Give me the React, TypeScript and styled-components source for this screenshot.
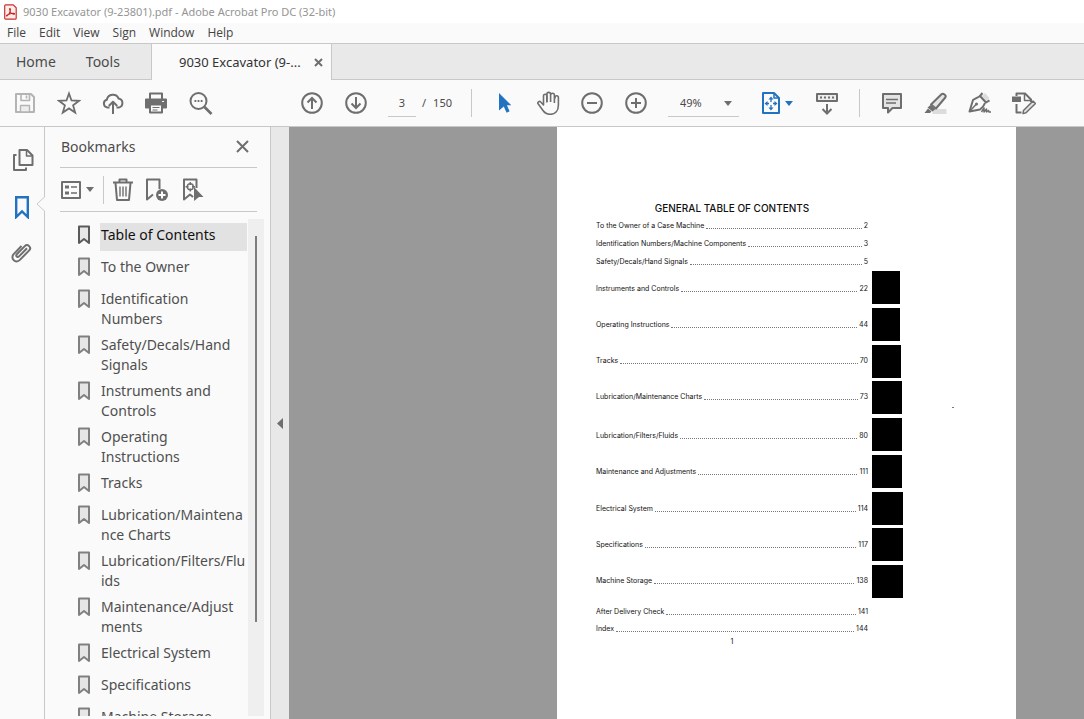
import React from "react";
import styled, { createGlobalStyle } from "styled-components";

const ink = "#6e6e6e";
const blue = "#2172c0";
const line = "#c8c8c8";
const chrome = "#fafafa";

const GlobalStyle = createGlobalStyle`
  * { box-sizing: border-box; }
  body {
    margin: 0;
    font-family: "Noto Sans", "Open Sans", sans-serif;
    color: #4b4b4b;
    background: ${chrome};
  }
  button, input, select { font: inherit; color: inherit; }
`;

const Window = styled.div`
  display: flex;
  flex-direction: column;
  height: 100vh;
  overflow: hidden;
`;

const TitleBar = styled.header`
  display: flex;
  align-items: center;
  gap: 6px;
  height: 23px;
  flex: none;
  padding-left: 4px;
  background: #fff;
  color: #959595;
  font-size: 11px;
  line-height: 16px;
`;

const MenuBar = styled.nav`
  display: flex;
  align-items: center;
  gap: 13px;
  height: 20px;
  flex: none;
  padding-left: 7px;
  font-family: "Open Sans", "Noto Sans", sans-serif;
  font-size: 12px;
  line-height: 16px;
`;

const MenuItem = styled.button`
  border: 0;
  padding: 0;
  background: none;
  color: #444;
`;

const TabStrip = styled.div`
  display: flex;
  height: 37px;
  flex: none;
  border-top: 1px solid ${line};
  background: #e9e9e9;
  box-shadow: inset 0 -1px ${line};
`;

const PlainTab = styled.button`
  border: 0;
  background: none;
  padding: 0 14px 0 16px;
  font-size: 14px;
  line-height: 20px;
`;

const NavTabs = styled.div`
  display: flex;
  width: 151px;
`;

const FileTab = styled.div`
  display: flex;
  align-items: center;
  justify-content: space-between;
  width: 181px;
  padding: 0 8px 0 27px;
  border: solid ${line};
  border-width: 0 1px;
  background: ${chrome};
  font-size: 13px;
  line-height: 20px;
  color: #333;
`;

const CloseButton = styled.button`
  display: flex;
  border: 0;
  padding: 0;
  background: none;
`;

const Toolbar = styled.div`
  display: flex;
  align-items: center;
  height: 47px;
  flex: none;
  padding-left: 3px;
  border-bottom: 1px solid ${line};
  font-size: 11px;
  line-height: 16px;
`;

const ToolButton = styled.button`
  display: flex;
  align-items: center;
  justify-content: center;
  gap: 4px;
  width: 44px;
  height: 44px;
  flex: none;
  border: 0;
  padding: 0;
  background: none;
`;

const ToolGroup = styled.div<{ $before?: number }>`
  display: flex;
  align-items: center;
  margin-left: ${(p) => p.$before ?? 0}px;
`;

const Separator = styled.span<{ $gap: number }>`
  width: 1px;
  height: 28px;
  margin: 0 ${(p) => p.$gap}px;
  background: ${line};
`;

const PageInput = styled.input`
  width: 28px;
  height: 28px;
  border: 0;
  border-bottom: 1px solid ${line};
  padding: 0;
  background: none;
  text-align: center;
`;

const PageCount = styled.span`
  display: flex;
  gap: 7px;
  width: 39px;
  margin-left: 6px;
`;

const ZoomField = styled.div`
  position: relative;
  width: 71px;
  border-bottom: 1px solid ${line};
  svg {
    position: absolute;
    right: 7px;
    top: 12px;
    pointer-events: none;
  }
`;

const ZoomSelect = styled.select`
  appearance: none;
  width: 100%;
  height: 27px;
  border: 0;
  padding: 0 0 0 12px;
  background: none;
`;

const Workspace = styled.div`
  display: flex;
  flex: 1;
  min-height: 0;
`;

const Rail = styled.nav`
  display: flex;
  flex-direction: column;
  width: 45px;
  flex: none;
  padding-top: 11px;
  border-right: 1px solid ${line};
`;

const RailButton = styled.button`
  position: relative;
  display: flex;
  align-items: center;
  justify-content: center;
  height: 46px;
  border: 0;
  padding: 0;
  background: none;
`;

const Notch = styled.svg`
  position: absolute;
  right: -1px;
  top: 12px;
`;

const Panel = styled.aside`
  display: flex;
  flex-direction: column;
  width: 226px;
  flex: none;
  padding: 0 6px 3px 15px;
  border-right: 1px solid ${line};
`;

const PanelHeader = styled.div`
  display: flex;
  align-items: center;
  justify-content: space-between;
  height: 41px;
  flex: none;
  margin-right: 7px;
  padding: 0 8px 1px 1px;
  border-bottom: 1px solid ${line};
`;

const PanelTitle = styled.h2`
  margin: 0;
  font-size: 14px;
  font-weight: 400;
  line-height: 20px;
`;

const PanelTools = styled.div`
  display: flex;
  align-items: center;
  height: 44px;
  flex: none;
  margin-right: 7px;
  padding-left: 1px;
  border-bottom: 1px solid ${line};
`;

const PanelButton = styled.button`
  display: flex;
  align-items: center;
  gap: 5px;
  border: 0;
  padding: 0;
  background: none;
`;

const IconRow = styled.div`
  display: flex;
  gap: 12px;
`;

const ListArea = styled.div`
  display: flex;
  flex: 1;
  min-height: 0;
  margin-top: 7px;
`;

const BookmarkList = styled.ul`
  display: flex;
  flex-direction: column;
  gap: 4px;
  flex: 1;
  margin: 0;
  padding: 4px 1px 0 17px;
  overflow: hidden;
  list-style: none;
`;

const BookmarkRow = styled.li`
  display: flex;
  gap: 10px;
  flex: none;
  svg { flex: none; margin: 2px 0 0 1px; }
`;

const BookmarkLink = styled.a<{ $selected?: boolean }>`
  flex: 1;
  min-height: 28px;
  padding: 2px 0 0 1px;
  background: ${(p) => (p.$selected ? "#e2e2e2" : "none")};
  color: ${(p) => (p.$selected ? "#111" : "#4f4f4f")};
  font-size: 14px;
  line-height: 20px;
  text-decoration: none;
  white-space: pre;
`;

const ScrollTrack = styled.div`
  width: 16px;
  padding: 17px 7px 0;
  background: #efefef;
`;

const ScrollThumb = styled.div`
  height: 386px;
  background: #7d7d7d;
`;

const Splitter = styled.button`
  display: flex;
  align-items: center;
  justify-content: center;
  width: 18px;
  flex: none;
  border: 0;
  padding: 0;
  background: #e8e8e8;
`;

const Canvas = styled.main`
  display: flex;
  flex: 1;
  background: #999;
`;

const Gutter = styled.div<{ $grow: number }>`
  flex: ${(p) => p.$grow} 1 0;
`;

const Sheet = styled.article`
  position: relative;
  width: 459px;
  padding: 74px 0 0 39px;
  background: #fff;
  color: #111;
  font-family: Inter, "Liberation Sans", Arial, sans-serif;
  font-size: 7px;
  line-height: 10px;
`;

const SheetTitle = styled.h1`
  width: 272px;
  margin: 0 0 2px;
  font-size: 10px;
  font-weight: 500;
  line-height: 14px;
  text-align: center;
`;

const Speck = styled.i`
  position: absolute;
  left: 395px;
  top: 280px;
  width: 2px;
  height: 1px;
  background: #777;
`;

const Sections = styled.div`
  display: flex;
  gap: 4px;
`;

const TocList = styled.ol`
  width: 272px;
  margin: 0;
  padding: 0;
  list-style: none;
`;

const TocRow = styled.li<{ $height: number; $before?: number }>`
  display: flex;
  align-items: center;
  gap: 2px;
  height: ${(p) => p.$height}px;
  margin-top: ${(p) => p.$before ?? 0}px;
`;

const Leader = styled.span`
  flex: 1;
  height: 6px;
  border-bottom: 1px dotted #777;
`;

const ThumbTabs = styled.div`
  display: flex;
  flex-direction: column;
  justify-content: space-between;
  padding-bottom: 1px;
`;

const ThumbTab = styled.span<{ $width: number }>`
  width: ${(p) => p.$width}px;
  height: 33px;
  background: #000;
`;

const Folio = styled.p`
  width: 272px;
  margin: 0;
  text-align: center;
`;

type IconProps = {
  w?: number;
  h?: number;
  color?: string;
  stroke?: number;
  children: React.ReactNode;
};

const Icon = ({ w = 24, h = 24, color = ink, stroke = 2, children }: IconProps) => (
  <svg
    width={w}
    height={h}
    viewBox={`0 0 ${w} ${h}`}
    fill="none"
    stroke={color}
    strokeWidth={stroke}
    strokeLinejoin="round"
    aria-hidden="true"
  >
    {children}
  </svg>
);

const Caret = ({ color = ink }: { color?: string }) => (
  <svg width="8" height="5" viewBox="0 0 8 5" aria-hidden="true">
    <path d="M0 0h8L4 5z" fill={color} />
  </svg>
);

const AcrobatLogo = () => (
  <svg width="13" height="16" viewBox="0 0 13 16" aria-hidden="true">
    <path
      d="M1.6.8h7.6l3 3v10.4c0 .6-.4 1-1 1H1.600c-.5 0-.9-.4-.9-1V1.700c0-.5.4-.9.9-.9z"
      fill="#fdeceb"
      stroke="#c5352f"
      strokeWidth="1.200"
    />
    <path
      d="M2.800 12c1.700-1.200 3.500-4.300 3.600-6.600 0-1.300-1-1.200-.8.1.4 2.300 2.300 4.700 4.200 4.800 1.100 0 1-.9-.2-1-2-.1-4.600.7-6.300 1.700-.9.6-1 .9-.5 1z"
      fill="none"
      stroke="#c5251f"
      strokeWidth="1.100"
    />
  </svg>
);

const SaveIcon = () => (
  <Icon color="#b4b4b4">
    <path d="M3 3h15l3 3v15H3z" />
    <path d="M8 3v6.500h8.500V3M13.500 4.500v3" strokeWidth="1.600" />
    <path d="M7.500 21v-6.500h9V21z" fill="#ededed" strokeWidth="1.400" />
  </Icon>
);

const StarIcon = () => (
  <Icon stroke={1.8}>
    <path
      strokeLinejoin="miter"
      d="M12 2.500l2.500 7 7.500.3-5.900 4.600 2.100 7.200-6.200-4.200-6.200 4.200 2.100-7.200L2 9.800l7.500-.3z"
    />
  </Icon>
);

const CloudIcon = () => (
  <Icon>
    <path d="M8.500 16.500H6.300A4 4 0 0 1 5.800 8.700 6.200 6.200 0 0 1 17.600 7.500a4.600 4.600 0 0 1 .3 9h-2.400" />
    <path d="M12 23V11M7.800 15l4.200-4.200 4.200 4.200" />
  </Icon>
);

const PrintIcon = () => (
  <Icon>
    <path d="M5 8V2.500h12V8" />
    <path d="M1 8.500h20v8H1z" fill={ink} />
    <path d="M5 13.500h12v8H5z" fill={chrome} />
    <path d="M7.500 16.500h7M7.500 19h5" strokeWidth="1.200" />
    <path d="M17 10.500h2" stroke={chrome} strokeWidth="1" />
  </Icon>
);

const FindIcon = () => (
  <Icon>
    <circle cx="9.500" cy="10" r="8" />
    <path d="M15.500 16l7 7" strokeWidth="2.600" />
    <path d="M5.500 10h1.800M8.600 10h1.800M11.700 10h1.800" />
  </Icon>
);

const CircleIcon = ({ d }: { d: string }) => (
  <Icon>
    <circle cx="12" cy="12" r="9.800" />
    <path d={d} strokeLinejoin="miter" />
  </Icon>
);

const PointerIcon = () => (
  <svg width="16" height="22" viewBox="0 0 16 22" aria-hidden="true">
    <path d="M3 1l12.300 12.200h-4.400l2.700 6-3 1.500-2.800-6.200L3 18.500z" fill={blue} />
  </svg>
);

const HandIcon = () => (
  <Icon stroke={1.600}>
    <path d="M19 7.500v-1a1.700 1.700 0 0 1 3.400 0V14c0 5.500-3 9.300-8 9.300-3.700 0-5.700-1.200-7.600-4l-4.700-6.500c-1-1.500 1.200-3.300 2.600-1.800L7.500 14V5a1.700 1.700 0 0 1 3.400 0v6.500" />
    <path d="M10.900 11V3.200a1.800 1.800 0 0 1 3.700 0V11M14.600 11V4.200a1.800 1.800 0 0 1 3.800 0V12" />
  </Icon>
);

const FitIcon = () => (
  <Icon w={20} color={blue}>
    <path d="M2 2h11l5 5v15H2z" />
    <path d="M13 2v5h5" strokeWidth="1.500" />
    <path d="M10 8v3M10 14v3M5.500 12.500H8M12 12.500h2.500" strokeWidth="1.300" />
    <path
      d="M10 5.500l2.500 3h-5zM10 19.500l2.500-3h-5zM3.500 12.500l3-2.500v5zM16.500 12.500l-3-2.500v5z"
      fill={blue}
      stroke="none"
    />
  </Icon>
);

const ScrollIcon = () => (
  <Icon>
    <path d="M2 3h20v7H2z" fill="#ededed" />
    <path d="M5 6.500h2M9 6.500h2M13 6.500h2M17 6.500h2" />
    <path d="M12 13v9M7.500 18l4.500 4.500 4.500-4.500" strokeLinejoin="miter" />
  </Icon>
);

const CommentIcon = () => (
  <Icon>
    <path d="M3 3h18v14h-8.500L8 21.500V17H3z" fill="#e4e4e4" />
    <path d="M6 8.500h12M6 12h10" strokeWidth="1.300" />
  </Icon>
);

const MarkerIcon = () => (
  <Icon>
    <path d="M8.500 18h14v5h-14z" fill="#dcdcdc" stroke="none" />
    <path d="M7 13.500L17.500 3.300c1.500-1.500 5.300.9 3.800 3.200L12 17.500z" fill="#e4e4e4" />
    <path d="M6.500 14l5 4-3 2.500-5-4z" fill={ink} stroke="none" />
    <path d="M4 17.500l3.500 3L6 22H.5z" fill={ink} stroke="none" />
  </Icon>
);

const SignIcon = () => (
  <Icon>
    <path d="M14 5l3-3 4.500 5-3.500 3z" fill="#dcdcdc" stroke="none" />
    <path d="M14.500 2l-2.500 3 6 6.500 3.500-2.200" />
    <path d="M12 5c-2.500 1.700-5.500 2.700-7 4L1.500 20.500 12 18.500c2-1.500 4-3.500 5-6.500" />
    <path d="M2 20l6-6.500" strokeWidth="1.500" />
    <circle cx="8.500" cy="13" r="1.500" fill={ink} stroke="none" />
    <path d="M13.500 21l2.500-4v4l2.500-3v3l2-1.500.5 1.500h2" strokeWidth="1.500" />
  </Icon>
);

const EditFileIcon = () => (
  <Icon>
    <path d="M4.500 5V2.500h8.500l6 6V11" />
    <path d="M12.500 2.500v7H19" strokeWidth="1.500" />
    <path d="M0 5.500h9v5.500H0z" fill={ink} stroke="none" />
    <path d="M4.500 13v8.500H9.500" />
    <path d="M11.500 19.500L21 10l2.500 2.500-9.500 9.300-3 .8z" fill="#e4e4e4" strokeWidth="1.500" />
  </Icon>
);

const PagesIcon = () => (
  <Icon>
    <path d="M9.500 1h7.500l5.500 5.500v9.500h-13z" />
    <path d="M16.500 1.500V7H22" strokeWidth="1.500" />
    <path d="M6.500 6H4v15h12v-2.500" />
  </Icon>
);

const RailBookmarkIcon = () => (
  <Icon w={16} color={blue} stroke={2.400}>
    <path d="M2.200 2.200h11.600V22L8 16.500 2.200 22z" strokeLinejoin="miter" />
  </Icon>
);

const ClipIcon = () => (
  <Icon>
    <path d="M17 7.200l-8 8.200c-1.500 1.500-3.600-.6-2.200-2.100l8-8.200c2.800-2.800 7.200 1.400 4.400 4.300l-9.300 9.500c-4.300 4.300-10.300-1.700-6-6L11.500 5" />
  </Icon>
);

const OptionsIcon = () => (
  <Icon w={20} h={18}>
    <path d="M1 1h18v16H1z" />
    <path d="M4 6h4M4 12h4" strokeWidth="3" />
    <path d="M10 6h6M10 12h6" strokeWidth="1.500" />
  </Icon>
);

const TrashIcon = () => (
  <Icon w={20}>
    <path d="M0 4.500h20M6.500 4V1.500h7V4M2.500 5l1.500 17h12l1.500-17" />
    <path d="M7 8.500v10M10 8.500v10M13 8.500v10" strokeWidth="1.400" />
  </Icon>
);

const AddBookmarkIcon = () => (
  <Icon>
    <path d="M14.500 11V1.500H2v20l6-5" />
    <circle cx="17" cy="17" r="6" fill={ink} stroke="none" />
    <path d="M17 13.500v7M13.500 17h7" stroke="#fff" />
  </Icon>
);

const FindBookmarkIcon = () => (
  <Icon>
    <path d="M15.500 10V1.500H3v20l6-5 3 2.500" />
    <circle cx="9.300" cy="8.800" r="3" strokeWidth="1.400" />
    <path d="M9.300 4v3M9.300 10.500v3M4.500 8.800h3M11 8.800h3" strokeWidth="1.400" />
    <path d="M13 9l9.500 10H18l-5 4z" fill={ink} stroke="none" />
  </Icon>
);

const RowBookmarkIcon = ({ dark }: { dark?: boolean }) => (
  <Icon w={12} h={20} color={dark ? "#5a5a5a" : "#808080"}>
    <path d="M1 1.500h10v16.500L6 14 1 18z" fill="#e6e6e6" />
  </Icon>
);

const Cross = ({ size, stroke }: { size: number; stroke: number }) => (
  <Icon w={size} h={size} stroke={stroke}>
    <path d={`M1 1L${size - 1} ${size - 1}M${size - 1} 1L1 ${size - 1}`} />
  </Icon>
);

const menus = ["File", "Edit", "View", "Sign", "Window", "Help"];

const bookmarks = [
  "Table of Contents",
  "To the Owner",
  "Identification\nNumbers",
  "Safety/Decals/Hand\nSignals",
  "Instruments and\nControls",
  "Operating\nInstructions",
  "Tracks",
  "Lubrication/Maintena\nnce Charts",
  "Lubrication/Filters/Flu\nids",
  "Maintenance/Adjust\nments",
  "Electrical System",
  "Specifications",
  "Machine Storage",
];

type Entry = { title: string; page: number; before?: number };

const frontMatter: Entry[] = [
  { title: "To the Owner of a Case Machine", page: 2 },
  { title: "Identification Numbers/Machine Components", page: 3 },
  { title: "Safety/Decals/Hand Signals", page: 5 },
];

const sections: Entry[] = [
  { title: "Instruments and Controls", page: 22 },
  { title: "Operating Instructions", page: 44 },
  { title: "Tracks", page: 70 },
  { title: "Lubrication/Maintenance Charts", page: 73 },
  { title: "Lubrication/Filters/Fluids", page: 80, before: 3 },
  { title: "Maintenance and Adjustments", page: 111 },
  { title: "Electrical System", page: 114, before: 1 },
  { title: "Specifications", page: 117 },
  { title: "Machine Storage", page: 138 },
];

const backMatter: Entry[] = [
  { title: "After Delivery Check", page: 141, before: 4 },
  { title: "Index", page: 144 },
];

const thumbWidths = [28, 28, 29, 30, 30, 30, 31, 31, 31];

const Toc = ({ entries, height }: { entries: Entry[]; height: number }) => (
  <TocList>
    {entries.map((e) => (
      <TocRow key={e.title} $height={height} $before={e.before}>
        <span>{e.title}</span>
        <Leader />
        <span>{e.page}</span>
      </TocRow>
    ))}
  </TocList>
);

export default function App() {
  return (
    <Window>
      <GlobalStyle />
      <TitleBar>
        <AcrobatLogo />
        <span>9030 Excavator (9-23801).pdf - Adobe Acrobat Pro DC (32-bit)</span>
      </TitleBar>
      <MenuBar>
        {menus.map((m) => (
          <MenuItem key={m}>{m}</MenuItem>
        ))}
      </MenuBar>
      <TabStrip>
        <NavTabs>
          <PlainTab>Home</PlainTab>
          <PlainTab>Tools</PlainTab>
        </NavTabs>
        <FileTab>
          <span>9030 Excavator (9-...</span>
          <CloseButton aria-label="Close tab">
            <Cross size={9} stroke={2} />
          </CloseButton>
        </FileTab>
      </TabStrip>

      <Toolbar>
        <ToolGroup>
          <ToolButton aria-label="Save" disabled><SaveIcon /></ToolButton>
          <ToolButton aria-label="Star file"><StarIcon /></ToolButton>
          <ToolButton aria-label="Upload to cloud"><CloudIcon /></ToolButton>
          <ToolButton aria-label="Print"><PrintIcon /></ToolButton>
          <ToolButton aria-label="Find text"><FindIcon /></ToolButton>
        </ToolGroup>
        <ToolGroup $before={67}>
          <ToolButton aria-label="Previous page">
            <CircleIcon d="M12 18V7M7.500 11.500L12 7l4.500 4.500" />
          </ToolButton>
          <ToolButton aria-label="Next page">
            <CircleIcon d="M12 6v11M7.500 12.500L12 17l4.500-4.500" />
          </ToolButton>
        </ToolGroup>
        <ToolGroup $before={10}>
          <PageInput aria-label="Page number" defaultValue="3" />
          <PageCount>
            <span>/</span>
            <span>150</span>
          </PageCount>
        </ToolGroup>
        <Separator $gap={10} />
        <ToolGroup>
          <ToolButton aria-label="Select"><PointerIcon /></ToolButton>
          <ToolButton aria-label="Pan"><HandIcon /></ToolButton>
          <ToolButton aria-label="Zoom out"><CircleIcon d="M7 12h10" /></ToolButton>
          <ToolButton aria-label="Zoom in"><CircleIcon d="M7 12h10M12 7v10" /></ToolButton>
        </ToolGroup>
        <ToolGroup $before={10}>
          <ZoomField>
            <ZoomSelect aria-label="Zoom level" defaultValue="49%">
              <option>49%</option>
              <option>100%</option>
            </ZoomSelect>
            <Caret />
          </ZoomField>
        </ToolGroup>
        <ToolGroup $before={16}>
          <ToolButton aria-label="Fit page">
            <FitIcon />
            <Caret color={blue} />
          </ToolButton>
        </ToolGroup>
        <ToolGroup $before={6}>
          <ToolButton aria-label="Scrolling pages"><ScrollIcon /></ToolButton>
        </ToolGroup>
        <Separator $gap={10} />
        <ToolGroup>
          <ToolButton aria-label="Add comment"><CommentIcon /></ToolButton>
          <ToolButton aria-label="Highlight"><MarkerIcon /></ToolButton>
          <ToolButton aria-label="Sign"><SignIcon /></ToolButton>
          <ToolButton aria-label="Edit PDF"><EditFileIcon /></ToolButton>
        </ToolGroup>
      </Toolbar>

      <Workspace>
        <Rail>
          <RailButton aria-label="Page thumbnails"><PagesIcon /></RailButton>
          <RailButton aria-label="Bookmarks">
            <RailBookmarkIcon />
            <Notch width="9" height="16" viewBox="0 0 9 16">
              <path d="M9 .500L1 8l8 7.500" fill={chrome} stroke={line} />
            </Notch>
          </RailButton>
          <RailButton aria-label="Attachments"><ClipIcon /></RailButton>
        </Rail>

        <Panel>
          <PanelHeader>
            <PanelTitle>Bookmarks</PanelTitle>
            <CloseButton aria-label="Close panel">
              <Cross size={13} stroke={2} />
            </CloseButton>
          </PanelHeader>
          <PanelTools>
            <PanelButton aria-label="Options">
              <OptionsIcon />
              <Caret />
            </PanelButton>
            <Separator $gap={9} />
            <IconRow>
              <PanelButton aria-label="Delete bookmark"><TrashIcon /></PanelButton>
              <PanelButton aria-label="New bookmark"><AddBookmarkIcon /></PanelButton>
              <PanelButton aria-label="Find current bookmark"><FindBookmarkIcon /></PanelButton>
            </IconRow>
          </PanelTools>
          <ListArea>
            <BookmarkList>
              {bookmarks.map((b, i) => (
                <BookmarkRow key={b}>
                  <RowBookmarkIcon dark={i === 0} />
                  <BookmarkLink href="#" $selected={i === 0}>{b}</BookmarkLink>
                </BookmarkRow>
              ))}
            </BookmarkList>
            <ScrollTrack>
              <ScrollThumb />
            </ScrollTrack>
          </ListArea>
        </Panel>

        <Splitter aria-label="Collapse panel">
          <svg width="6" height="11" viewBox="0 0 6 11" aria-hidden="true">
            <path d="M6 0v11L0 5.500z" fill={ink} />
          </svg>
        </Splitter>

        <Canvas>
          <Gutter $grow={268} />
          <Sheet>
            <SheetTitle>GENERAL TABLE OF CONTENTS</SheetTitle>
            <Toc entries={frontMatter} height={18} />
            <Sections>
              <Toc entries={sections} height={36} />
              <ThumbTabs>
                {thumbWidths.map((w, i) => (
                  <ThumbTab key={i} $width={w} />
                ))}
              </ThumbTabs>
            </Sections>
            <Toc entries={backMatter} height={17} />
            <Folio>1</Folio>
            <Speck />
          </Sheet>
          <Gutter $grow={68} />
        </Canvas>
      </Workspace>
    </Window>
  );
}
